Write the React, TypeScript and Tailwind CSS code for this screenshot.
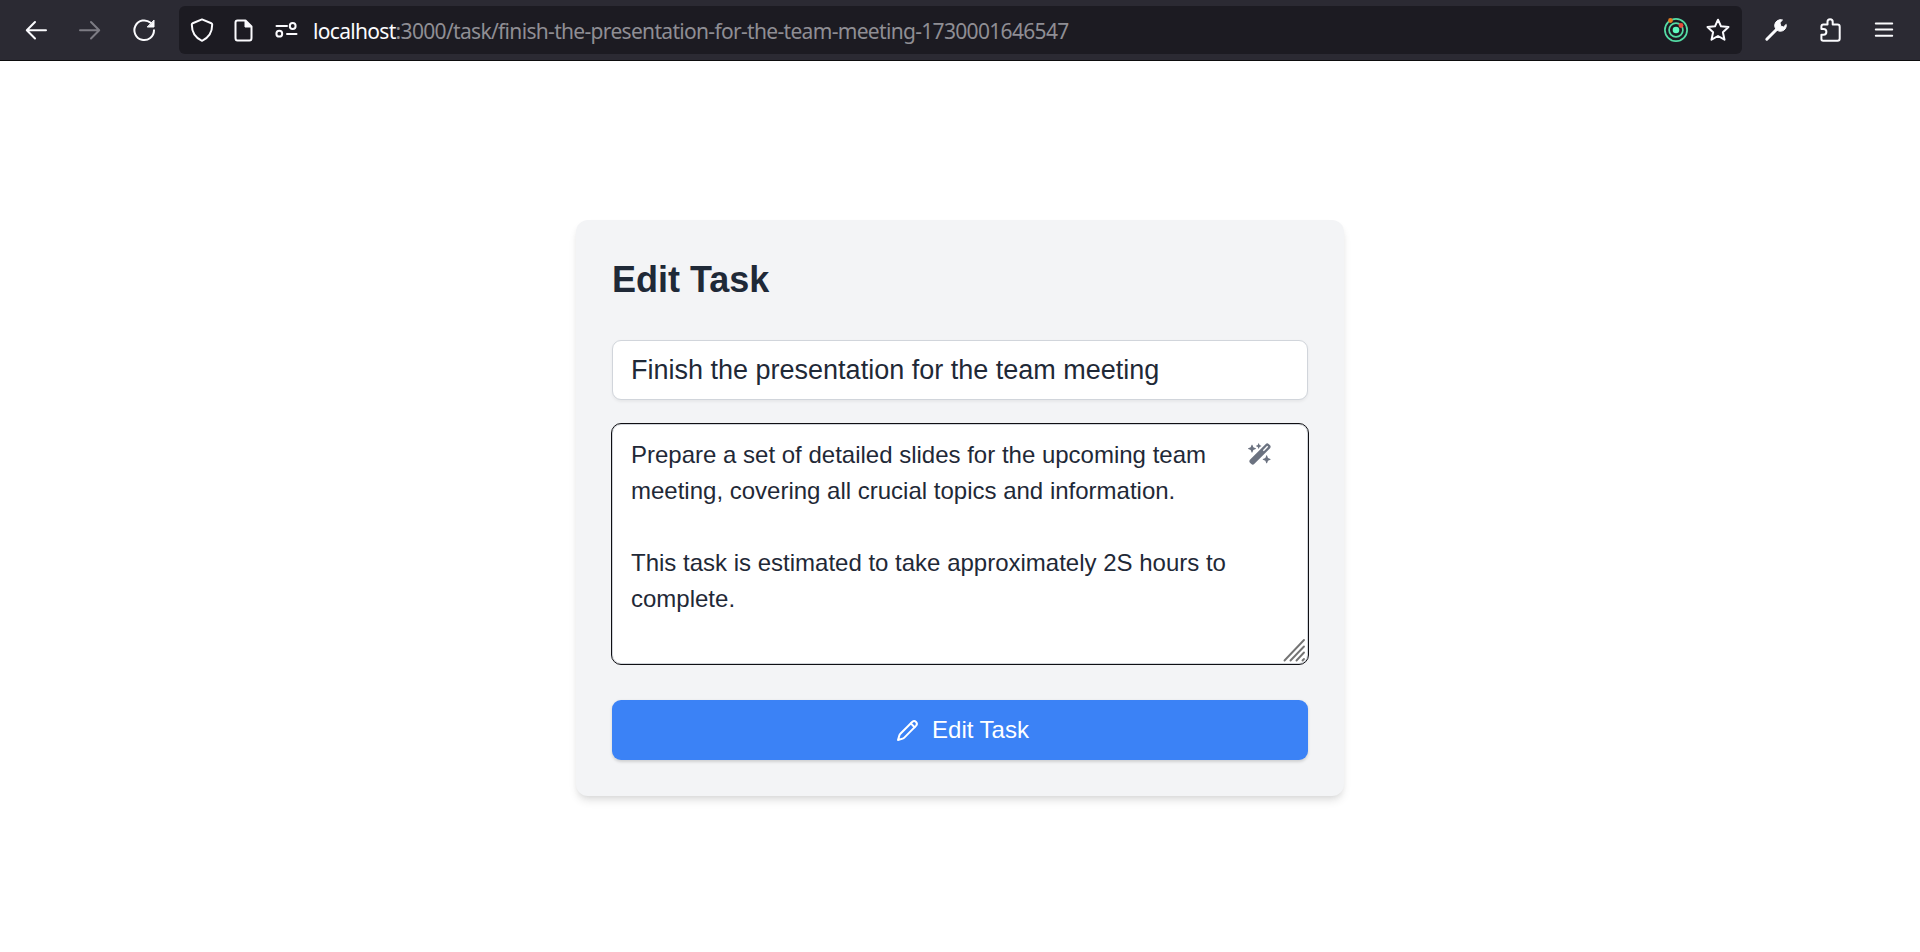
import React from "react";
import { FaWandMagicSparkles } from "react-icons/fa6";

const URL_PATH = ":3000/task/finish-the-presentation-for-the-team-meeting-1730001646547";

const DESCRIPTION =
  "Prepare a set of detailed slides for the upcoming team meeting, covering all crucial topics and information.\n\nThis task is estimated to take approximately 2S hours to complete.";

function Icon({ children, className = "" }: { children: React.ReactNode; className?: string }) {
  return (
    <svg
      viewBox="0 0 24 24"
      fill="none"
      stroke="currentColor"
      strokeWidth="2"
      strokeLinecap="round"
      strokeLinejoin="round"
      className={`size-6 shrink-0 ${className}`}
    >
      {children}
    </svg>
  );
}

function BrowserBar() {
  return (
    <header className="flex h-[61px] shrink-0 items-center border-b border-[#0c0c0d] bg-[#2b2a33] text-[#fbfbfe]">
      <div className="flex w-[179px] items-center gap-[30px] pl-6">
        <Icon>
          <path d="M22 12.2H3M11 4L2.8 12.2L11 20.5" />
        </Icon>
        <Icon className="text-[#7d7c84]">
          <path d="M2 12.2H21M13 4L21.2 12.2L13 20.5" />
        </Icon>
        <Icon>
          <path d="M22 12.2A9.8 9.8 0 1 1 18.6 4.8" />
          <path d="M22 2.5V9H15.6Z" fill="currentColor" strokeWidth="1" />
        </Icon>
      </div>
      <div className="flex h-12 w-[1563px] items-center rounded-md bg-[#1c1b22] pr-3 pl-[11px]">
        <Icon>
          <path d="M12 1.4L21.3 5.2Q22.2 5.6 22.2 6.6C22.2 14 18.5 20 12 22.8C5.5 20 1.8 14 1.8 6.6Q1.8 5.6 2.7 5.2Z" />
        </Icon>
        <Icon className="ml-[18px]">
          <path d="M5.5 2.5H13.5L19.5 8.5V20Q19.5 22.500 17.5 22.5H5.5Q3.5 22.5 3.5 20V4.5Q3.5 2.5 5.5 2.5Z" />
          <path d="M13 2.5V9H19.5Z" fill="currentColor" strokeWidth="1" />
        </Icon>
        <Icon className="ml-[18px]">
          <path d="M2.5 8H13M13 16H22.5" />
          <circle cx="18.7" cy="8" r="2.9" />
          <circle cx="5.3" cy="15.7" r="2.9" />
        </Icon>
        <span className="ml-[15px] flex-1 pt-px font-['Noto_Sans','Open_Sans',sans-serif] text-[21px] leading-7 tracking-[-0.68px] whitespace-nowrap text-[#8f8e94]">
          <span className="text-[#fbfbfe]">localhost</span>
          {URL_PATH}
        </span>
        <svg viewBox="0 0 24 24" fill="none" className="mr-[18px] size-6 shrink-0">
          <circle cx="12" cy="12" r="11.1" stroke="#54dca5" strokeWidth="1.7" />
          <circle cx="12" cy="12" r="6.9" stroke="#54dca5" strokeWidth="1.7" />
          <circle cx="12" cy="12" r="3.3" fill="#5ffbc0" />
          <circle cx="6.5" cy="2.5" r="2.4" fill="#e67e22" />
          <circle cx="17" cy="7.5" r="2.4" fill="#e74c3c" />
        </svg>
        <Icon>
          <path d="M12 1.7L15 8.3L22.5 9L16.9 14.2L18.5 21.7L12 18L5.5 21.7L7.1 14.2L1.5 9L9 8.3Z" />
        </Icon>
      </div>
      <Icon className="ml-[22px]">
        <path d="M2.8 21.2L13.5 10.5" strokeWidth="3" />
        <path
          d="M18.2 1.9A5.8 5.8 0 1 0 22.2 6.4L19.5 8.9L16.8 8.2L16 5Z"
          fill="currentColor"
          strokeWidth="1"
        />
      </Icon>
      <Icon className="ml-[31px]">
        <path d="M2.4 21V16.7H4.5A2.9 2.9 0 0 0 4.5 10.9H2.4V8.5Q2.4 6.5 4.4 6.5H8.5V3.8A2.6 2.6 0 0 1 13.7 3.8V6.5H18.5Q20.7 6.5 20.7 8.7V20.5Q20.7 22.7 18.5 22.7H4.2Q2.4 22.7 2.4 21Z" />
      </Icon>
      <Icon className="ml-[29px]">
        <path d="M3.8 5.5H20.2M3.8 11.5H20.2M3.8 17.7H20.2" />
      </Icon>
    </header>
  );
}

function ResizeGrip() {
  return (
    <svg
      viewBox="0 0 24 24"
      stroke="#747474"
      strokeWidth="1.9"
      strokeLinecap="round"
      className="pointer-events-none absolute right-0.5 bottom-0.5 size-6"
    >
      <path d="M2.500 22.500L22 2M8.500 22.500L22 8.500M14.500 22.500L22 14.500M20.500 22.500L22 21" />
    </svg>
  );
}

export default function App() {
  return (
    <div className="flex h-[952px] flex-col overflow-hidden bg-white font-['Liberation_Sans',Arial,sans-serif] text-gray-800">
      <BrowserBar />
      <main className="flex flex-1 justify-center pt-[159px]">
        <form className="flex h-[576px] w-[768px] flex-col rounded-xl bg-[#f3f4f6] p-9 shadow-[0_6px_9px_-1.5px_rgba(0,0,0,0.1),0_3px_6px_-3px_rgba(0,0,0,0.1)]">
          <h1 className="mb-9 text-[36px] leading-[48px] font-bold text-[#1f2937]">Edit Task</h1>
          <input
            readOnly
            value="Finish the presentation for the team meeting"
            className="mb-6 h-[60px] w-full rounded-[9px] border border-[#d1d5db] bg-white px-[18px] text-[27px] text-[#1f2937] shadow-[0_1.5px_3px_rgba(0,0,0,0.05)] outline-none"
          />
          <div className="relative mb-9 h-60">
            <textarea
              readOnly
              value={DESCRIPTION}
              className="block h-60 w-full resize-none overflow-hidden rounded-[9px] border border-[#d1d5db] bg-white px-[18px] py-3 text-[24px] leading-9 text-[#1f2937] outline outline-1 outline-[#101014]"
            />
            <button type="button" className="absolute top-[18px] right-9 text-[#6b7280]">
              <FaWandMagicSparkles className="size-6" />
            </button>
            <ResizeGrip />
          </div>
          <button
            type="button"
            className="flex h-[60px] items-center justify-center gap-3 rounded-[9px] bg-[#3b82f6] pl-[5px] text-[24px] leading-9 text-white shadow-[0_1.5px_3px_rgba(0,0,0,0.15)]"
          >
            <Icon>
              <path d="M16.4 3.8A2.7 2.7 0 0 1 20.2 7.6L8.3 19.6Q7.600 20.300 6.600 20.600L2 22L3.400 17.400Q3.700 16.400 4.400 15.700Z" />
              <path d="M14.8 5.4L18.6 9.2" />
            </Icon>
            <span>Edit Task</span>
          </button>
        </form>
      </main>
    </div>
  );
}
